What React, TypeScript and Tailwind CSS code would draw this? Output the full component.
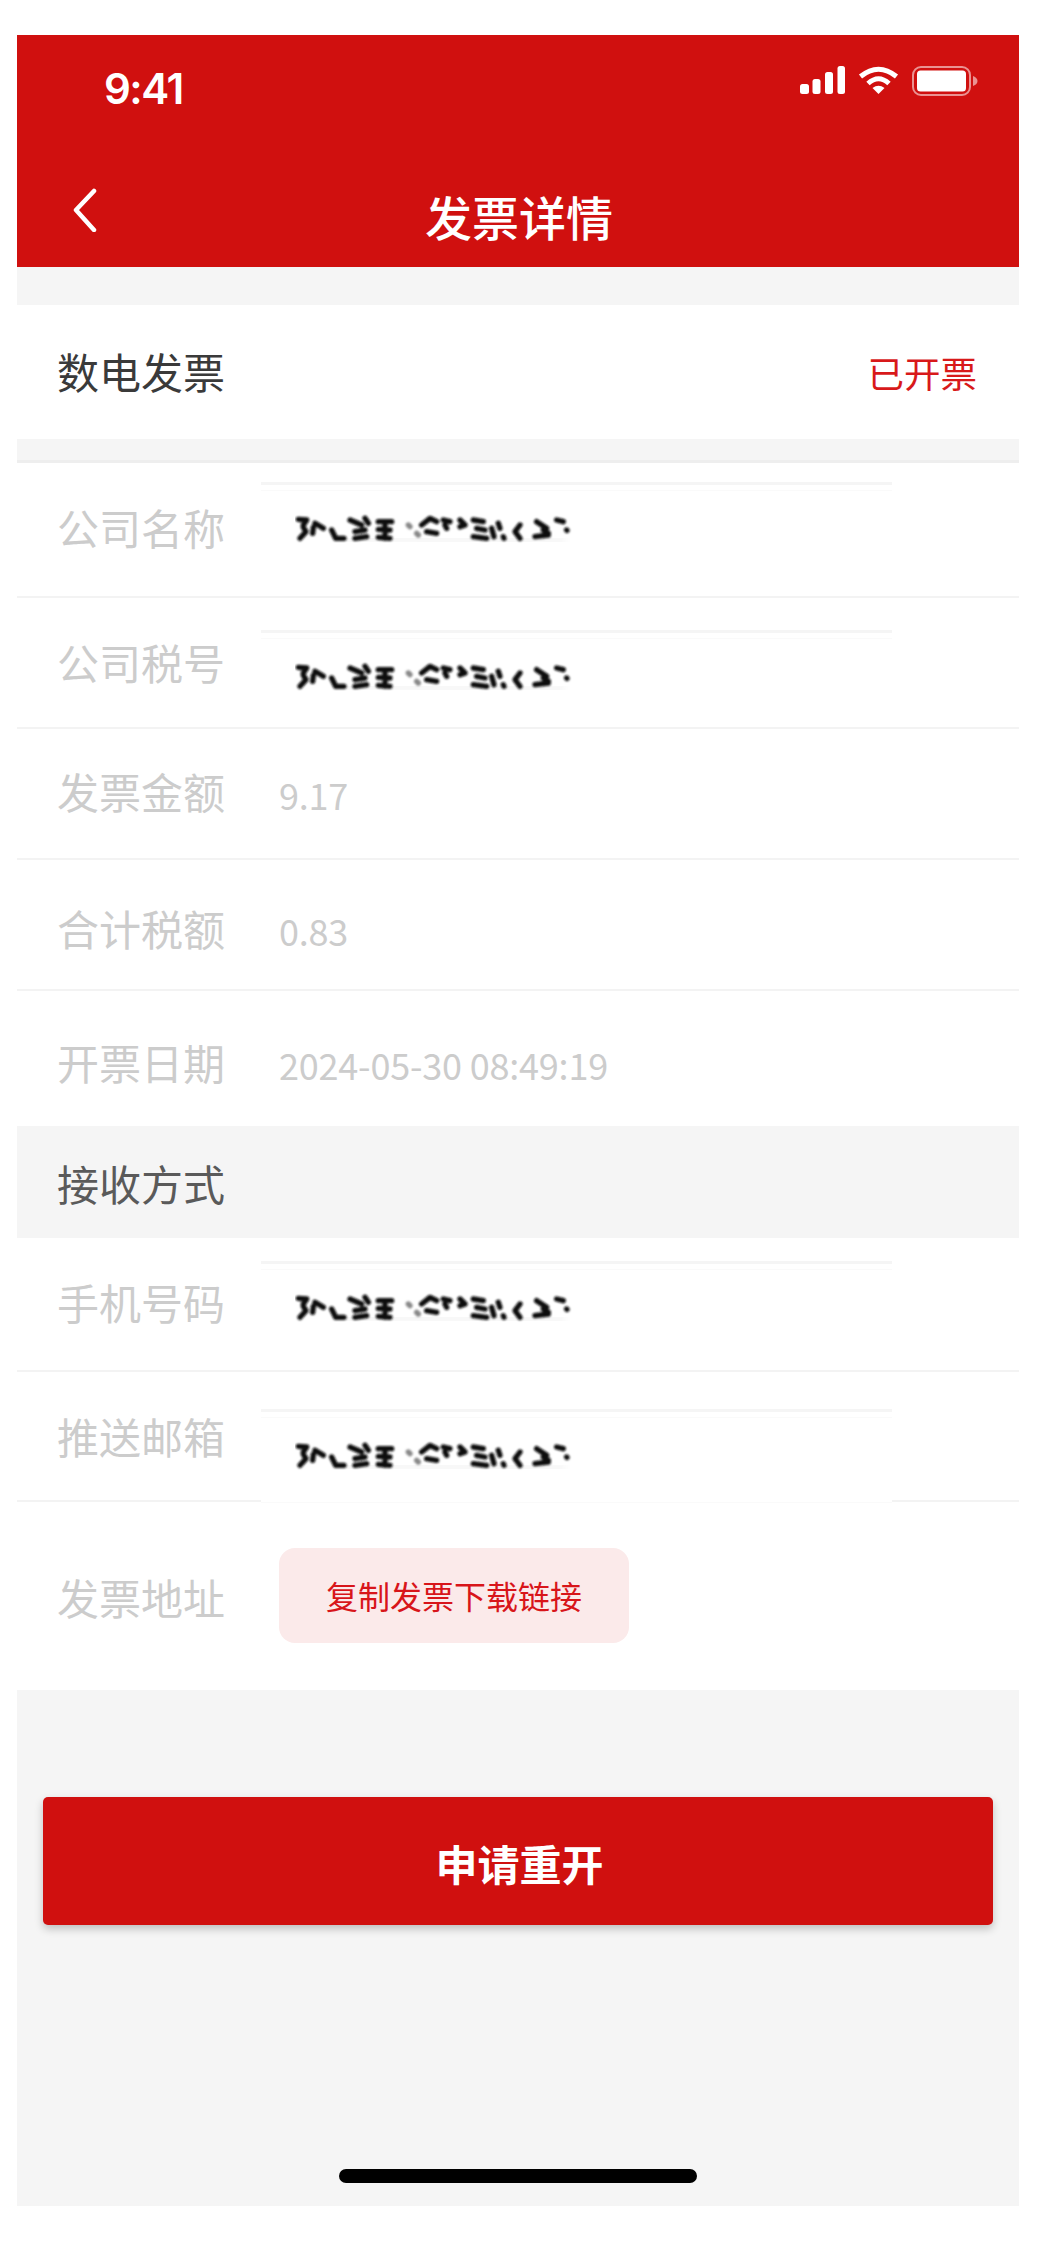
const Smudge = () => (
  <svg width="290" height="40" viewBox="0 0 290 40" className="block" aria-hidden="true">
    <defs>
      <filter id="sm" x="-5%" y="-30%" width="110%" height="170%">
        <feGaussianBlur stdDeviation="3.4" />
      </filter>
      <filter id="sm2" x="-5%" y="-50%" width="110%" height="200%">
        <feGaussianBlur stdDeviation="3" />
      </filter>
    </defs>
    <path d="M50 29 L270 31" stroke="#000000" strokeOpacity="0.03" strokeWidth="10" filter="url(#sm2)" fill="none" />
    <g filter="url(#sm)" transform="scale(0.3333) translate(-75 -120)" fill="none" stroke="#111111" strokeWidth="16" strokeLinecap="round" strokeLinejoin="round">
      <path d="M85 148 L110 150 L100 165 M100 172 L108 185 L90 205" />
      <path d="M135 160 L160 175 M130 172 L128 190" />
      <path d="M185 180 L197 205 L222 205" />
      <path d="M240 150 L275 165 M255 185 L285 180 M255 205 L290 200 M285 145 L295 160" />
      <path d="M325 155 L365 155 M325 178 L360 180 M325 202 L360 205 M345 155 L345 205" />
      <path d="M415 165 l5 5 M440 190 l5 5" stroke="#888888" />
      <path d="M455 165 L480 145 L500 155 M470 185 L500 190" />
      <path d="M520 150 L540 155 M525 165 L530 175" />
      <path d="M570 150 L585 165 L570 170" />
      <path d="M610 150 L640 155 M620 175 L645 180 M610 200 L650 205" />
      <path d="M665 175 L672 200 M685 160 L690 175 M700 200 L702 205" />
      <path d="M750 165 L735 185 L750 205" />
      <path d="M800 155 L830 175 M795 200 L835 195 M820 180 L835 190" />
      <path d="M860 150 L880 155 M890 180 L891 181" />
    </g>
  </svg>
);

const Input = ({ cls }: { cls: string }) => (
  <div className={`w-[631px] shrink-0 bg-white border-t-[3px] border-[#f5f5f5] ${cls}`}>
    <div className="h-[6px] border-b border-[#fafafa]" />
    <div className="ml-[34px] mt-[19px]">
      <Smudge />
    </div>
  </div>
);

const Label = ({ text, cls }: { text: string; cls: string }) => (
  <div className={`text-[42px] leading-[42px] text-[#cccccc] whitespace-nowrap ${cls}`}>{text}</div>
);

const Row = ({ cls, children }: { cls: string; children: React.ReactNode }) => (
  <div className={`flex items-start pl-[40px] bg-white border-b-2 border-[#f3f3f3] ${cls}`}>{children}</div>
);

const Value = ({ text, cls }: { text: string; cls: string }) => (
  <div className={`text-[36px] leading-[36px] tracking-[-0.2px] text-[#cccccc] whitespace-nowrap ${cls}`}>{text}</div>
);

export default function App() {
  return (
    <div
      className="min-h-[2243px] bg-white pt-[35px] px-[17px]"
      style={{ fontFamily: '"Noto Sans CJK SC", "Noto Sans", sans-serif' }}
    >
      <div className="w-[1002px]">
        {/* Header */}
        <div className="h-[232px] bg-[#d0100f] text-white">
          <div className="h-[108px] flex items-start justify-between pl-[87px] pr-[41px]">
            <div
              className="mt-[33px] text-[42px] leading-[42px] font-semibold tracking-[-1.5px]"
              style={{ fontFamily: 'Inter, "Noto Sans", sans-serif' }}
            >
              9:41
            </div>
            <div className="mt-[31px] flex items-start gap-[13px]">
              <svg width="45" height="28" viewBox="0 0 45 28" fill="white">
                <rect x="0" y="18" width="9" height="10" rx="2.5" />
                <rect x="12.5" y="13" width="8" height="15" rx="2.5" />
                <rect x="25" y="6" width="8" height="22" rx="2.5" />
                <rect x="37.5" y="0" width="7.5" height="28" rx="2.5" />
              </svg>
              <svg width="41" height="28" viewBox="0 0 41 28" fill="none" stroke="white" strokeWidth="5">
                <path d="M2.5 10.5 Q20.5 -4 38.5 10.5" />
                <path d="M10 17.5 Q20.5 8 31 17.5" />
                <path d="M14.5 22 Q20.5 17.5 26.5 22 L20.5 28 Z" fill="white" stroke="none" />
              </svg>
              <svg width="66" height="30" viewBox="0 0 66 30" fill="none">
                <rect x="1" y="1" width="57" height="28" rx="8" stroke="white" strokeOpacity="0.55" strokeWidth="2" />
                <rect x="5" y="4.5" width="49" height="21" rx="3.5" fill="white" />
                <path d="M61 10 C64 11 65.5 13 65.5 15 C65.5 17 64 19 61 20 Z" fill="white" fillOpacity="0.55" />
              </svg>
            </div>
          </div>
          <div className="h-[124px] flex items-start">
            <svg className="ml-[54px] mt-[45px] shrink-0" width="26" height="44" viewBox="0 0 26 44" fill="none" stroke="white" strokeWidth="4.5" strokeLinecap="round" strokeLinejoin="round">
              <path d="M23 3 L5 22 L23 42" />
            </svg>
            <div className="ml-[328px] mt-[50px] text-[47px] leading-[46px] font-medium">发票详情</div>
          </div>
        </div>

        <div className="h-[38px] bg-[#f5f5f5]" />

        <div className="h-[134px] bg-white flex items-center justify-between pl-[40px] pr-[42px]">
          <div className="text-[42px] leading-[42px] text-[#3a3a3a] mb-[3px]">数电发票</div>
          <div className="text-[36.5px] leading-[36px] text-[#d8191a] mt-[1px]">已开票</div>
        </div>

        <div className="h-[24px] bg-[#f5f5f5] border-b-[3px] border-[#eeeeee]" />

        <Row cls="h-[135px]">
          <Label text="公司名称" cls="mt-[43px] w-[204px]" />
          <Input cls="mt-[19px]" />
        </Row>
        <Row cls="h-[131px]">
          <Label text="公司税号" cls="mt-[43px] w-[204px]" />
          <Input cls="mt-[32px]" />
        </Row>
        <Row cls="h-[131px]">
          <Label text="发票金额" cls="mt-[41px] w-[222px]" />
          <Value text="9.17" cls="mt-[47px]" />
        </Row>
        <Row cls="h-[131px]">
          <Label text="合计税额" cls="mt-[47px] w-[222px]" />
          <Value text="0.83" cls="mt-[52px]" />
        </Row>
        <div className="h-[135px] bg-white flex items-start pl-[40px]">
          <Label text="开票日期" cls="mt-[50px] w-[222px]" />
          <Value text="2024-05-30 08:49:19" cls="mt-[55px]" />
        </div>

        <div className="h-[112px] bg-[#f5f5f5] flex items-center pl-[40px] pt-[1px]">
          <div className="text-[42px] leading-[42px] text-[#5a5a5a]">接收方式</div>
        </div>

        <Row cls="h-[134px]">
          <Label text="手机号码" cls="mt-[43px] w-[204px]" />
          <Input cls="mt-[23px]" />
        </Row>
        <Row cls="h-[130px]">
          <Label text="推送邮箱" cls="mt-[43px] w-[204px]" />
          <Input cls="mt-[37px] h-[94px] border-b border-b-[#fafafa]" />
        </Row>
        <div className="h-[188px] bg-white flex items-start pl-[40px]">
          <Label text="发票地址" cls="mt-[74px] w-[222px]" />
          <div className="mt-[46px] w-[350px] h-[95px] rounded-[16px] bg-[#fbeaea] flex items-center justify-center text-[32px] leading-[34px] text-[#d8151a] pb-[2px]">
            复制发票下载链接
          </div>
        </div>

        {/* Footer */}
        <div className="bg-[#f5f5f5] h-[516px] pt-[107px] px-[26px]">
          <div className="h-[128px] rounded-[5px] bg-[#d0100f] shadow-[0_4px_8px_rgba(0,0,0,0.22)] flex items-center justify-center text-[42px] leading-[42px] font-bold text-white pt-[4px] pl-[3px]">
            申请重开
          </div>
          <div className="mt-[244px] mx-auto w-[358px] h-[14px] rounded-full bg-black" />
        </div>
      </div>
    </div>
  );
}
